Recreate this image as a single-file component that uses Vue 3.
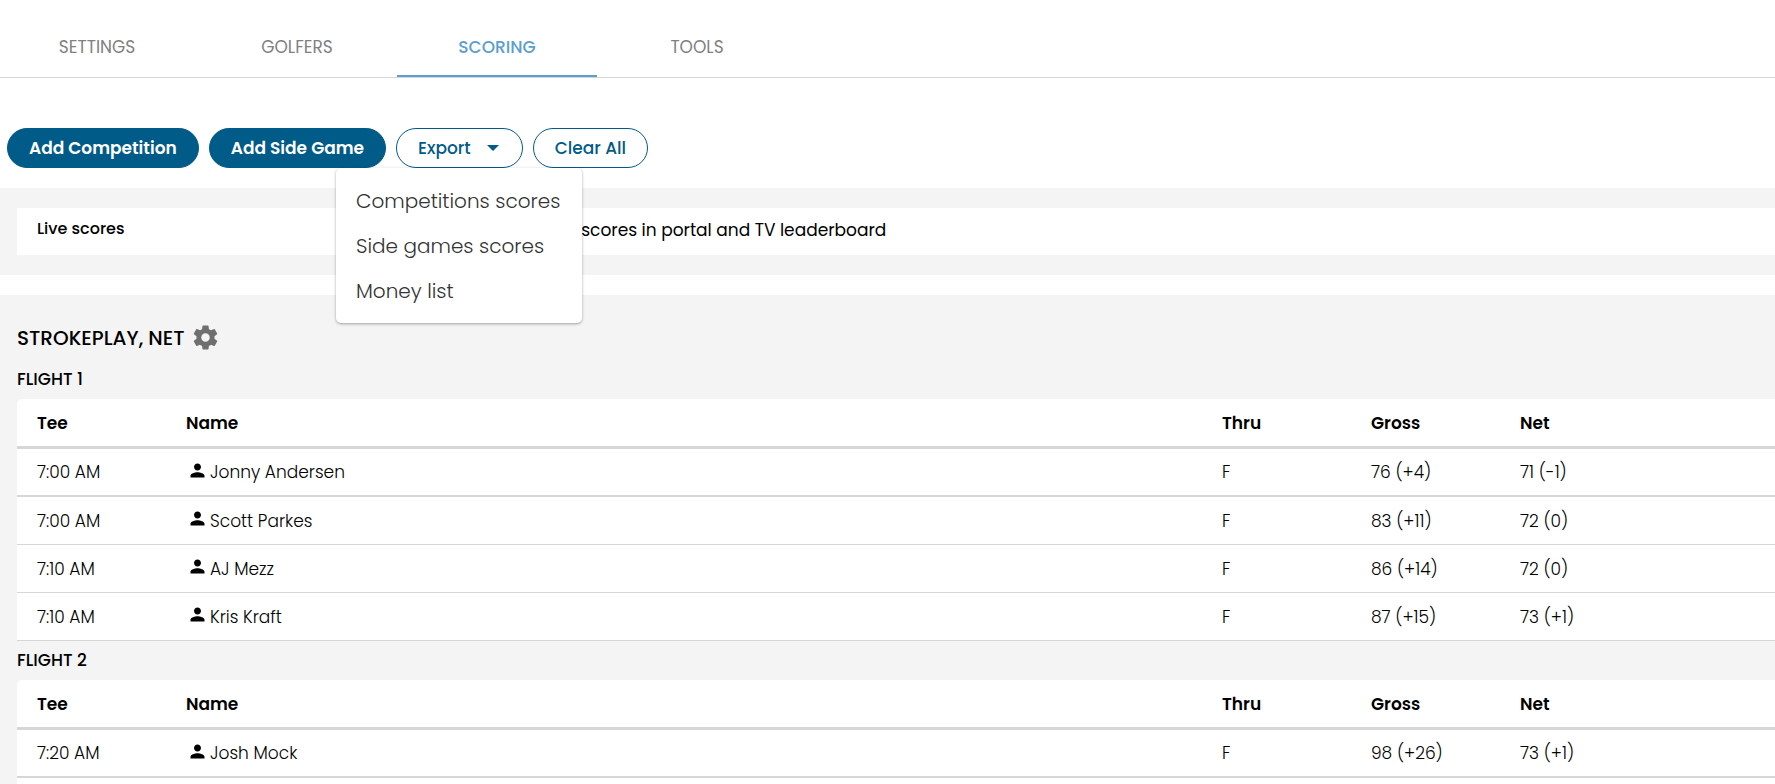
<template>
  <div class="scoring-page">
    <nav class="tabs">
      <a
        v-for="tab in tabs"
        :key="tab"
        href="#"
        class="tab"
        :class="{ active: tab === activeTab }"
        @click.prevent="activeTab = tab"
      >
        {{ tab }}
      </a>
    </nav>

    <div class="toolbar">
      <button class="btn primary">Add Competition</button>
      <button class="btn primary">Add Side Game</button>
      <div class="export">
        <button class="btn outline" @click="menuOpen = !menuOpen">
          Export
          <svg class="caret" viewBox="0 0 12 6" aria-hidden="true">
            <path d="M0 0h12L6 6z" />
          </svg>
        </button>
        <div v-if="menuOpen" class="menu">
          <button v-for="item in exportItems" :key="item" class="menu-item">{{ item }}</button>
        </div>
      </div>
      <button class="btn outline">Clear All</button>
    </div>

    <section class="live">
      <div class="live-row">
        <strong class="live-title">Live scores</strong>
        <span class="live-text">Show scores in portal and TV leaderboard</span>
      </div>
    </section>

    <section class="competition">
      <div class="section-header">
        <h2>STROKEPLAY, NET</h2>
        <button class="settings-btn" aria-label="Settings">
          <svg viewBox="0 0 24 24">
            <path
              d="M19.43 12.98c.04-.32.07-.64.07-.98s-.03-.66-.07-.98l2.11-1.65c.19-.15.24-.42.12-.64l-2-3.46c-.12-.22-.39-.3-.61-.22l-2.49 1c-.52-.4-1.08-.73-1.69-.98l-.38-2.65C14.46 2.18 14.25 2 14 2h-4c-.25 0-.46.18-.49.42l-.38 2.65c-.61.25-1.17.59-1.69.98l-2.49-1c-.23-.09-.49 0-.61.22l-2 3.46c-.13.22-.07.49.12.64l2.11 1.65c-.04.32-.07.65-.07.98s.03.66.07.98l-2.11 1.65c-.19.15-.24.42-.12.64l2 3.46c.12.22.39.3.61.22l2.49-1c.52.4 1.08.73 1.69.98l.38 2.65c.03.24.24.42.49.42h4c.25 0 .46-.18.49-.42l.38-2.65c.61-.25 1.17-.59 1.69-.98l2.49 1c.23.09.49 0 .61-.22l2-3.46c.12-.22.07-.49-.12-.64l-2.11-1.65zM12 15.5c-1.93 0-3.5-1.57-3.5-3.5s1.57-3.5 3.5-3.5 3.5 1.57 3.5 3.5-1.57 3.5-3.5 3.5z"
            />
          </svg>
        </button>
      </div>

      <div v-for="flight in flights" :key="flight.name" class="flight">
        <h3>{{ flight.name }}</h3>
        <div class="table-wrap">
          <table>
            <thead>
              <tr>
                <th class="narrow">Tee</th>
                <th>Name</th>
                <th class="narrow">Thru</th>
                <th class="narrow">Gross</th>
                <th class="last">Net</th>
              </tr>
            </thead>
            <tbody>
              <tr v-for="player in flight.players" :key="player.name">
                <td>{{ player.tee }}</td>
                <td>
                  <div class="player">
                    <svg viewBox="0 0 24 24" aria-hidden="true">
                      <path d="M12 12c2.21 0 4-1.79 4-4s-1.79-4-4-4-4 1.79-4 4 1.79 4 4 4zm0 2c-2.67 0-8 1.34-8 4v2h16v-2c0-2.66-5.33-4-8-4z" />
                    </svg>
                    <span>{{ player.name }}</span>
                  </div>
                </td>
                <td>{{ player.thru }}</td>
                <td>{{ player.gross }}</td>
                <td>{{ player.net }}</td>
              </tr>
            </tbody>
          </table>
        </div>
      </div>
    </section>
  </div>
</template>

<script setup>
import { ref } from 'vue'

const tabs = ['SETTINGS', 'GOLFERS', 'SCORING', 'TOOLS']
const activeTab = ref('SCORING')

const menuOpen = ref(true)
const exportItems = ['Competitions scores', 'Side games scores', 'Money list']

const flights = [
  {
    name: 'FLIGHT 1',
    players: [
      { tee: '7:00 AM', name: 'Jonny Andersen', thru: 'F', gross: '76 (+4)', net: '71 (-1)' },
      { tee: '7:00 AM', name: 'Scott Parkes', thru: 'F', gross: '83 (+11)', net: '72 (0)' },
      { tee: '7:10 AM', name: 'AJ Mezz', thru: 'F', gross: '86 (+14)', net: '72 (0)' },
      { tee: '7:10 AM', name: 'Kris Kraft', thru: 'F', gross: '87 (+15)', net: '73 (+1)' }
    ]
  },
  {
    name: 'FLIGHT 2',
    players: [
      { tee: '7:20 AM', name: 'Josh Mock', thru: 'F', gross: '98 (+26)', net: '73 (+1)' }
    ]
  }
]
</script>

<style>
body {
  margin: 0;
  background: #fff;
}
</style>

<style scoped>
.scoring-page {
  display: flex;
  flex-direction: column;
  min-height: 100vh;
  font-family: Poppins, Inter, "Liberation Sans", sans-serif;
  font-size: 17px;
  font-weight: 300;
  color: #000;
}

button {
  font-family: inherit;
  cursor: pointer;
}

.tabs {
  display: flex;
  padding-top: 17px;
  margin-left: -3px;
  border-bottom: 1px solid #d6d6d6;
}

.tab {
  box-sizing: border-box;
  width: 200px;
  height: 60px;
  border-bottom: 2px solid transparent;
  line-height: 60px;
  text-align: center;
  text-decoration: none;
  font-size: 17px;
  font-weight: 400;
  color: #808080;
}

.tab.active {
  border-bottom-color: #5a9fd0;
  color: #5a9fd0;
  font-weight: 500;
}

.toolbar {
  display: flex;
  gap: 10px;
  padding: 50px 7px 20px;
}

.btn {
  display: flex;
  align-items: center;
  height: 40px;
  padding: 0 21px;
  border: 1px solid #005b88;
  border-radius: 20px;
  font-size: 17px;
  font-weight: 500;
  white-space: nowrap;
}

.btn.primary {
  background: #005b88;
  color: #fff;
  font-weight: 600;
}

.btn.outline {
  background: #fff;
  color: #005b88;
}

.caret {
  width: 12px;
  height: 6px;
  margin: 0 2px 0 16px;
  fill: #005b88;
}

.export {
  position: relative;
}

.menu {
  position: absolute;
  top: 40px;
  left: -60px;
  z-index: 1;
  box-sizing: border-box;
  width: 246px;
  padding: 10px 0;
  border-radius: 5px;
  background: #fff;
  box-shadow: 0 1px 3px rgba(0, 0, 0, 0.35);
}

.menu-item {
  display: block;
  width: 100%;
  height: 45px;
  padding: 0 20px;
  border: none;
  background: none;
  text-align: left;
  font-size: 20px;
  font-weight: 300;
  color: #333;
  white-space: nowrap;
}

.live {
  padding: 20px 0 20px 17px;
  margin-bottom: 20px;
  background: #f4f4f4;
}

.live-row {
  display: flex;
  align-items: center;
  height: 47px;
  padding-left: 20px;
  background: #fff;
}

.live-title {
  width: 494px;
  padding-bottom: 6px;
  font-size: 16px;
  font-weight: 500;
}

.live-text {
  padding-bottom: 4px;
  font-weight: 400;
}

.competition {
  display: flex;
  flex-direction: column;
  flex: 1;
  padding: 20px 0 0 17px;
  background: #f4f4f4;
}

.section-header {
  display: flex;
  align-items: center;
  gap: 6px;
  height: 45px;
}

h2 {
  margin: 0;
  font-size: 20px;
  font-weight: 500;
}

.settings-btn {
  display: flex;
  padding: 0;
  border: none;
  background: none;
}

.settings-btn svg {
  width: 29px;
  height: 29px;
  fill: #6f6f6f;
}

.flight:last-child {
  display: flex;
  flex-direction: column;
  flex: 1;
}

h3 {
  margin: 0;
  font-size: 17px;
  font-weight: 500;
  line-height: 39px;
}

.table-wrap {
  flex: 1;
  background: #fff;
  border-radius: 5px 0 0 0;
}

table {
  width: 100%;
  border-spacing: 0;
  table-layout: fixed;
}

th,
td {
  box-sizing: border-box;
  height: 48px;
  padding: 0 0 0 20px;
  border-bottom: 1px solid #d6d6d6;
  text-align: left;
  white-space: nowrap;
}

th {
  height: 50px;
  border-bottom-width: 3px;
  font-weight: 600;
}

tbody tr:first-child td {
  border-bottom-width: 2px;
}

.narrow {
  width: 149px;
}

.last {
  width: 275px;
}

.player {
  display: flex;
  align-items: center;
  gap: 2px;
  padding-left: 1px;
}

.player svg {
  width: 21px;
  height: 21px;
  margin-bottom: 4px;
}
</style>
